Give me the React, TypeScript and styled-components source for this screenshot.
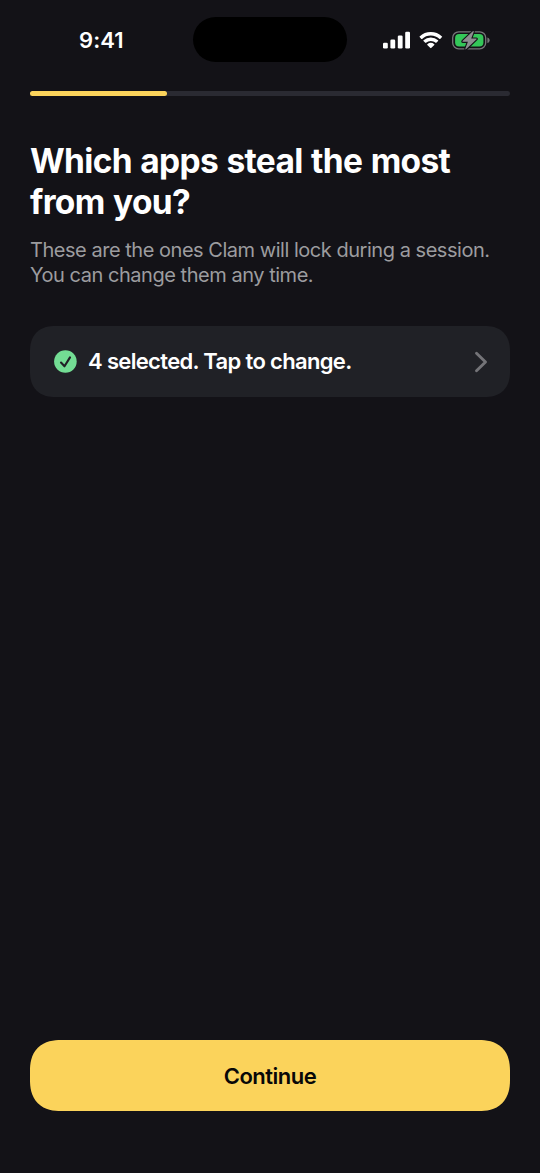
import React from 'react';
import styled, { createGlobalStyle } from 'styled-components';

const GlobalStyle = createGlobalStyle`
  * { box-sizing: border-box; }
  body {
    margin: 0;
    background: #131217;
    font-family: Inter, "Liberation Sans", sans-serif;
    -webkit-font-smoothing: antialiased;
  }
`;

const Screen = styled.div`
  display: flex;
  flex-direction: column;
  width: 540px;
  height: 1173px;
  padding: 0 30px 62px;
  background: #131217;
  color: #fff;
`;

const StatusBar = styled.header`
  display: grid;
  grid-template-columns: 163px 154px 1fr;
  align-items: center;
  height: 45px;
  margin-top: 17px;
`;

const Time = styled.time`
  padding: 1px 0 0 49px;
  font-size: 22px;
  line-height: 28px;
  font-weight: 570;
  letter-spacing: 0.1px;
`;

const Island = styled.div`
  height: 45px;
  border-radius: 23px;
  background: #000;
`;

const StatusIcons = styled.svg`
  display: block;
  width: 110px;
  height: 24px;
  margin-left: 35px;
`;

const ProgressTrack = styled.div`
  flex: none;
  height: 5px;
  margin-top: 29px;
  border-radius: 3px;
  background: #2a2a32;
`;

const ProgressFill = styled.div<{ $value: number }>`
  width: ${({ $value }) => $value}%;
  height: 100%;
  border-radius: 3px;
  background: #fbd35b;
`;

const Title = styled.h1`
  margin: 45px 0 0;
  font-size: 33.5px;
  line-height: 41px;
  font-weight: 700;
  letter-spacing: -0.68px;
  word-spacing: 1.2px;
  white-space: nowrap;
`;

const Subtitle = styled.p`
  margin: 15px 0 0;
  color: #9c9c9f;
  font-size: 20px;
  line-height: 25px;
  letter-spacing: -0.47px;
  white-space: nowrap;
`;

const SelectionRow = styled.button`
  display: flex;
  align-items: center;
  flex: none;
  height: 71px;
  margin-top: 38px;
  padding: 0 22px 0 23.5px;
  border: 0;
  border-radius: 25px;
  corner-shape: superellipse(1.2);
  background: #202126;
  color: #fff;
  font: inherit;
`;

const SelectionLabel = styled.span`
  flex: 1;
  margin: 0 0 2px 11.5px;
  font-size: 22px;
  line-height: 28px;
  font-weight: 570;
  letter-spacing: -0.66px;
  text-align: left;
`;

const Icon = styled.svg`
  display: block;
  flex: none;
`;

const ContinueButton = styled.button`
  flex: none;
  height: 71px;
  margin-top: auto;
  border: 0;
  border-radius: 31px;
  corner-shape: superellipse(1.25);
  background: #fbd35b;
  color: #080808;
  font: inherit;
  font-size: 22px;
  line-height: 28px;
  font-weight: 570;
  letter-spacing: -0.5px;
`;

export default function App() {
  return (
    <>
      <GlobalStyle />
      <Screen>
        <StatusBar>
          <Time>9:41</Time>
          <Island />
          <StatusIcons viewBox="0 0 110 24" fill="none">
            <g fill="#fff">
              <rect x="1" y="14.7" width="4.8" height="5.9" rx="1.3" />
              <rect x="8.4" y="11.5" width="4.8" height="9.1" rx="1.3" />
              <rect x="15.8" y="7.5" width="4.8" height="13.1" rx="1.3" />
              <rect x="23.2" y="3.7" width="4.8" height="16.9" rx="1.3" />
            </g>
            <g fill="#fff" transform="translate(0 0.6)">
              <path d="M48.8 6.9c3.3 0 6.4 1.3 8.7 3.4.2.2.5.2.7 0l1.8-1.8c.2-.2.2-.5 0-.7a16.3 16.3 0 0 0-22.4 0c-.2.2-.2.5 0 .7l1.8 1.8c.2.2.5.2.7 0a12.7 12.7 0 0 1 8.7-3.4Z" />
              <path d="M48.8 12.4c1.8 0 3.5.7 4.8 1.8.2.2.5.2.7 0l1.8-1.8c.2-.2.2-.5 0-.7a10.6 10.6 0 0 0-14.6 0c-.2.2-.2.5 0 .7l1.8 1.8c.2.2.5.2.7 0a7.3 7.3 0 0 1 4.8-1.8Z" />
              <path d="M52.3 16.3c.2-.2.2-.5 0-.7a5.4 5.4 0 0 0-7 0c-.2.2-.2.5 0 .7l3.1 3.1c.2.2.5.2.7 0Z" />
            </g>
            <g transform="translate(0 0.5)">
              <rect x="70.7" y="3.3" width="33" height="17" rx="6" stroke="#77777a" strokeWidth="1.3" />
              <rect x="73.1" y="5.6" width="28.3" height="12.5" rx="4" fill="#34c759" />
              <path d="M105.4 9v5.6c1.3-.4 2.2-1.5 2.2-2.8s-.9-2.4-2.2-2.8Z" fill="#77777a" />
              <path d="M90.8 2.8 80.5 12.6q-.5.7.4.7h5l-2.5 6.700q-.2 1.400.9.600l10.300-9.800q.5-.7-.4-.7h-5l2.500-6.700q.2-1.400-.9-.6Z" fill="#8e8e91" stroke="#131217" strokeWidth="2.200" strokeLinejoin="round" paintOrder="stroke" />
            </g>
          </StatusIcons>
        </StatusBar>
        <ProgressTrack>
          <ProgressFill $value={28.57} />
        </ProgressTrack>
        <Title>
          Which apps steal the most
          <br />
          from you?
        </Title>
        <Subtitle>
          These are the ones Clam will lock during a session.
          <br />
          You can change them any time.
        </Subtitle>
        <SelectionRow>
          <Icon width="23" height="23" viewBox="0 0 23 23" fill="none">
            <circle cx="11.4" cy="11.5" r="11.3" fill="#73dd94" />
            <path d="m7 12.5 3.500 3.800 5.500-8.900" stroke="#202126" strokeWidth="2.100" strokeLinecap="round" strokeLinejoin="round" />
          </Icon>
          <SelectionLabel>4 selected. Tap to change.</SelectionLabel>
          <Icon width="14" height="22" viewBox="0 0 14 22" fill="none">
            <path d="m2.500 2.300 9 8.700-9 8.700" stroke="#747478" strokeWidth="2.900" strokeLinecap="round" strokeLinejoin="round" />
          </Icon>
        </SelectionRow>
        <ContinueButton>Continue</ContinueButton>
      </Screen>
    </>
  );
}
